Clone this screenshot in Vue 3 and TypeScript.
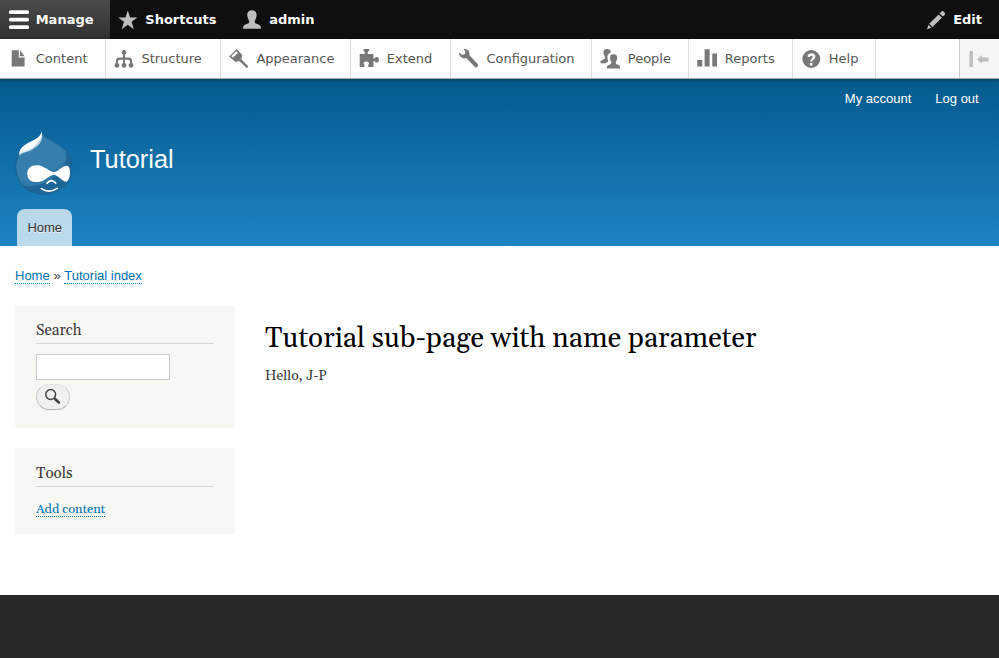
<script setup lang="ts">
interface MenuItem {
  label: string
  icon: string
}

const menu: MenuItem[] = [
  { label: 'Content', icon: 'M3.7 1.3h7.1v7.3h5.8v8.9H3.7zM12 1.3l4.6 5.9H12z' },
  {
    label: 'Structure',
    icon: 'M10 1.1a2.3 2.3 0 0 1 1 4.4v3.1h3.3q3.8 0 3.8 3.6v1.9a2.4 2.4 0 1 1-2.1 0v-1.9q0-1.5-1.9-1.5h-3.1v3.4a2.4 2.4 0 1 1-2 0v-3.4H5.9q-1.9 0-1.9 1.5v1.9a2.4 2.4 0 1 1-2.1 0v-1.9q0-3.6 3.8-3.6H9V5.5A2.3 2.3 0 0 1 10 1.1z',
  },
  {
    label: 'Appearance',
    icon: 'M7.6.1l5.7 5.8-1 4.3 7.1 7.2-1.7 1.6-7.4-7.1-3.8 1.2L.1 7.4zM7.3 2.2L2.3 7.1l1.5 1.6 5.2-5z',
  },
  {
    label: 'Extend',
    icon: 'M4.6 0h5.5v1.7L8.7 3v2h5.8v4.5h1.1l1.2-1.6h1.5q1.7.3 1.7 2.8t-1.7 2.8h-1.5l-1.2-1.4h-1.1v5.8H9.2v-2l1-1.3q-.3-2.1-2.9-2.1t-2.8 2.1l1 1.3v2H.7V5h5.1V3L4.6 1.7z',
  },
  {
    label: 'Configuration',
    icon: 'M4.5.2q3.2-.7 5 1.5 1.4 1.8.8 4.2l8.4 9q1.1 1.4 0 2.7-1.5 1.5-3 .2L7.2 9.1q-3 .9-5.3-1Q-.2 6.3 0 3.5l3.1 2.3 2.6-.5.8-2.6z',
  },
  {
    label: 'People',
    icon: 'M7 0q3.7 0 3.8 3.4-3.600 1.200-3.400 5.200.1 2 .9 3.400-.3 1.200-1.800 1.600L5.300 14.200H.500L.5 12.600q.6-1.700 3.600-2.400.9-.4.9-1.500 0-.8-.5-1.400Q3.500 5.200 3.400 3.200 3.500 0 7 0zM13.500 5.200q3.600 0 3.700 3.400 0 2.200-1.100 3.800-.4.5-.4 1.200 0 1.100 1 1.600 2.900.8 3.300 2.300l.2 2.100H6.800l.2-2.100q.4-1.500 3.500-2.300.9-.5.9-1.600 0-.7-.4-1.200-1-1.600-1-3.800.1-3.400 3.500-3.400z',
  },
  { label: 'Reports', icon: 'M.3 11h5v6.5h-5zM7.6.2h5v17.3h-5zM15.3 4.4h5v13.1h-5z' },
  {
    label: 'Help',
    icon: 'M10.3 1a9 9 0 1 1 0 18 9 9 0 0 1 0-18zM6.3 7.3l2.2 1q.5-1.5 1.8-1.5 1.4 0 1.4 1.2 0 .7-.9 1.4-1.7 1.2-1.7 3.2h2.3q0-1.2 1.3-2.1 1.7-1.1 1.7-2.8 0-3.3-4-3.4-3 0-4.1 3zM8.9 13.9v2.5h2.6v-2.5z',
  },
]
</script>

<template>
  <div class="page">
    <nav class="bar">
      <a class="tab active">
        <svg class="icon" viewBox="0 0 20 20" fill="#fff">
          <rect y=".3" width="20" height="3.6" rx="1.5" /><rect y="7.8" width="20" height="3.6" rx="1.5" /><rect y="15.3" width="20" height="3.6" rx="1.5" />
        </svg>Manage
      </a>
      <a class="tab">
        <svg class="icon" viewBox="0 0 20 20" fill="#bebebe"><path d="M9.8.4l2.3 7h7.4l-5.9 4.4 2.2 7.4-6-4.5-6 4.5L6 11.8.1 7.4h7.4z" /></svg>Shortcuts
      </a>
      <a class="tab">
        <svg class="icon" viewBox="0 0 20 20" fill="#bebebe"><path d="M10 .3q4.500 0 4.700 4.500-.1 2.600-1.300 4.900-.7 1.100-.7 2.200.1 1.200 1.300 1.700 3.800 1 4.500 2.500l.5 2.700H.9l.5-2.700q.7-1.500 4.500-2.500 1.300-.5 1.300-1.700 0-1.100-.7-2.200-1.200-2.300-1.300-4.900Q5.500.3 10 .3z" /></svg>admin
      </a>
      <a class="tab edit">
        <svg class="icon" viewBox="0 0 20 20" fill="#bebebe"><path d="M13.600 3.400l2.200-2.100q1-.6 1.800.2l1.300 1.400q.6.900-.1 1.800l-1.900 1.900zM12.600 4.400l3.300 3.300L6.400 17l-3.200-3.200zM2.500 14.700l3 3-4.200 1.500L1 18.900z" /></svg>Edit
      </a>
    </nav>
    <nav class="tray">
      <a v-for="item in menu" :key="item.label" class="item">
        <svg class="icon" viewBox="0 0 20 20"><path fill="#787878" fill-rule="evenodd" :d="item.icon" /></svg>{{ item.label }}
      </a>
      <button class="toggle" aria-label="Vertical orientation">
        <svg width="20" height="20" viewBox="0 0 20 20" fill="#bebebe"><path d="M.5 2h3.400v16H.5zM8 10.300l5-4.300v2.400h6.500v4H13v2.300z" /></svg>
      </button>
    </nav>

    <header class="header">
      <div class="account"><a>My account</a><a>Log out</a></div>
      <div class="branding">
        <svg class="logo" viewBox="15 15 174 195">
          <path fill="#2d79a9" stroke="#145b88" stroke-width="2" d="M95 18C98 33 107 37 124 45 157 63 186 83 186 130 186 177 148 208 104 208 53 208 17 173 17 127 17 95 34 72 59 56 81 43 95 36 95 18z" />
          <path fill="#3f83b1" d="M96 29Q100 38 126 51C156 68 167 82 166 101 164 124 131 134 100 151 73 166 43 176 30 164 8 126 23 83 58 62 80 49 95 42 96 29z" opacity=".5" />
          <path fill="#155f90" d="M169 79C188 103 190 145 174 169 159 193 132 206 103 207 75 206 51 200 37 183 78 188 112 176 139 147 160 129 173 110 169 79z" opacity=".7" />
          <path fill="#b5d2e4" d="M95 19C101 46 90 60 69 73 53 83 39 81 29 92 24 82 32 70 45 61 70 46 93 41 95 19z" />
          <path fill="#fff" d="M94 19C98 41 86 56 67 68 52 79 39 78 29 87 27 76 37 65 48 58 72 44 93 39 94 19z" />
          <path fill="#fff" d="M52 149C50 130 64 120 83 121 103 122 117 140 130 141 144 142 153 123 171 122 184 124 183 162 170 170 156 170 146 151 132 149 116 150 106 169 85 171 65 173 53 164 52 149z" />
          <path fill="none" stroke="#fff" stroke-width="5" stroke-linecap="round" d="M111 175Q124 159 137 174M94 191Q117 206 142 190" />
        </svg>
        <span class="site-name">Tutorial</span>
      </div>
      <a class="home-tab">Home</a>
    </header>

    <div class="breadcrumb"><a>Home</a><span>»</span><a>Tutorial index</a></div>
    <main class="main">
      <aside class="sidebar">
        <section class="block search">
          <h2>Search</h2>
          <input type="text" aria-label="Search">
          <button class="go" aria-label="Search">
            <svg width="16" height="16" viewBox="0 0 16 16" fill="none" stroke="#444"><circle cx="5.700" cy="5.500" r="4.900" stroke-width="1.500" /><path d="M9.100 8.900l1.300 1.300" stroke-width="1.500" /><path d="M10.400 10.200l3.400 3.300" stroke-width="2.600" stroke-linecap="round" /></svg>
          </button>
        </section>
        <section class="block tools">
          <h2>Tools</h2>
          <a>Add content</a>
        </section>
      </aside>
      <article class="content">
        <h1>Tutorial sub-page with name parameter</h1>
        <p>Hello, J-P</p>
      </article>
    </main>
    <footer class="footer"></footer>
  </div>
</template>

<style>
body { margin: 0; background: #fff; }
</style>

<style scoped>
* { box-sizing: border-box; }
.page { height: 658px; display: flex; flex-direction: column; overflow: hidden; color: #3b3b3b; font-family: "Liberation Sans", Arial, sans-serif; }
.bar { flex: none; display: flex; height: 39px; background: #0f0f0f; color: #fff; font: bold 13px/39px "DejaVu Sans", sans-serif; }
.icon { flex: none; width: 20px; height: 20px; margin-right: 7px; }
.tab { display: flex; align-items: center; padding: 0 17.500px 0 8.300px; }
.active { width: 110px; padding: 0 0 0 8.700px; background: linear-gradient(#4b4b4b, #303030); }
.edit { margin-left: auto; padding-right: 17px; }
.tray { position: relative; z-index: 1; flex: none; display: grid; grid-template-columns: 106px 115px 130px 100px 141px 97px 104px 83px 1fr; height: 40px; background: #fff; border-bottom: 1px solid #aaa; box-shadow: 0 1px 4px rgba(0, 0, 0, .4); color: #565656; font: 13px/39px "DejaVu Sans", sans-serif; }
.item { display: flex; align-items: center; padding-left: 8.400px; border-right: 1px solid #ddd; }
.item .icon { margin-right: 7.400px; }
.item:nth-child(2) .icon, .item:nth-child(3) .icon, .item:nth-child(5) .icon { margin: 0 7.500px 0 -.500px; }
.toggle { display: flex; align-items: center; justify-self: end; width: 40px; padding: 0 0 0 9px; background: #f5f5f5; border: 0; border-left: 1px solid #c9c9c9; }
.header { flex: none; display: flex; flex-direction: column; height: 167px; background: linear-gradient(#055a8e, #1d84c3); color: #fff; }
.account { display: flex; justify-content: flex-end; gap: 24px; padding: 12px 20.300px 0 0; font-size: 13px; line-height: 15px; }
.branding { display: flex; margin: 24px 0 0 15px; }
.logo { width: 58px; height: 65px; }
.site-name { margin: 14px 0 0 17px; font-size: 25.400px; line-height: 30px; }
.home-tab { align-self: flex-start; height: 37px; margin: 14px 0 0 17px; padding: 0 10.400px; border-radius: 8px 8px 0 0; background: rgba(255, 255, 255, .7); color: #333; font-size: 13px; line-height: 37px; text-shadow: 0 1px #eee; }
.breadcrumb { flex: none; display: flex; gap: 3.700px; height: 59px; padding: 22px 15px 0; font-size: 13px; line-height: 15px; }
.breadcrumb a, .tools a { height: 16px; color: #0071b3; border-bottom: 1px dotted #0071b3; }
.main { flex: none; display: flex; gap: 30px; height: 290px; padding-left: 15px; font-family: Georgia, Gelasio, "Liberation Serif", serif; }
.sidebar { display: flex; flex-direction: column; gap: 20px; width: 220px; }
.block { display: flex; flex-direction: column; align-items: flex-start; padding: 15px 20px 0 21px; background: #f6f6f2; border: 1px solid #f9f9f7; border-left-width: 0; }
.search { height: 123px; }
.tools { height: 87px; }
.block h2 { align-self: stretch; height: 23px; margin: 0 0 10px; border-bottom: 1px solid #d6d6d6; font-size: 15.200px; font-weight: normal; line-height: 20px; }
.search input { width: 134px; height: 26px; margin: 0; border: 1px solid #ccc; background: #fff; }
.go { display: flex; align-items: center; justify-content: center; width: 34px; height: 26px; margin-top: 4px; padding: 0; border: 1px solid #ccc; border-top-color: #e4e4e4; border-bottom-color: #b4b4b4; border-radius: 13px; background: #f0f0f0; }
.tools a { margin-top: 4px; font-size: 12.800px; line-height: 17px; }
.content h1 { margin: 16px 0 0; color: #000; font-size: 28px; font-weight: normal; line-height: 36px; white-space: nowrap; }
.content p { margin: 9px 0 0; font-size: 14px; line-height: 20px; }
.footer { flex: 1; background: #292929; }
</style>
